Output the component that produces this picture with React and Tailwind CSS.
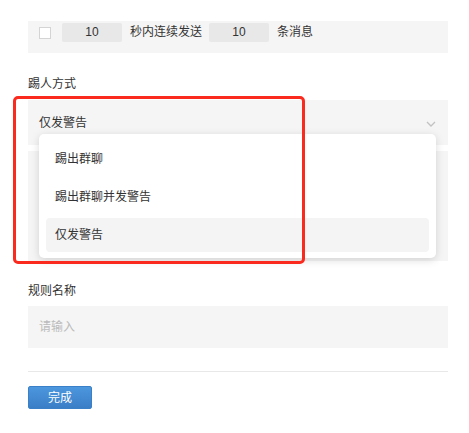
import React from "react";

export default function App() {
  const font = { fontFamily: '"Liberation Sans","Noto Sans CJK SC",sans-serif' };
  return (
    <div className="relative w-[469px] h-[433px] bg-white text-[12px] text-[#333] pt-[21px]" style={font}>
      <div className="pl-[28px] w-[448px]">
        {/* top panel */}
        <div className="h-[32px] bg-[#f5f5f5] pt-[2px] pl-[11px] flex items-start">
          <div className="h-[19px] flex items-center">
            <div className="w-[12px] h-[12px] border border-[#d4d4d4] bg-white"></div>
            <div className="ml-[11px] w-[60px] h-[19px] bg-[#e8e8e8] rounded-[2px] flex items-center justify-center text-[12px] leading-[19px]">10</div>
            <span className="ml-[8px] leading-[19px]">秒内连续发送</span>
            <div className="ml-[7px] w-[60px] h-[19px] bg-[#e8e8e8] rounded-[2px] flex items-center justify-center text-[12px] leading-[19px]">10</div>
            <span className="ml-[8px] leading-[19px]">条消息</span>
          </div>
        </div>

        {/* kick method */}
        <div className="mt-[22px] leading-[18px] mb-[7px]">踢人方式</div>
        <div className="h-[45px] bg-[#f5f5f5] pl-[11px] pr-[10px] flex items-center justify-between pt-[1px]">
          <span>仅发警告</span>
          <svg width="10" height="6" viewBox="0 0 10 6" className="mr-[2px] mt-[1px]">
            <path d="M1 1 L5 5 L9 1" fill="none" stroke="#c2c2c2" strokeWidth="1.3" />
          </svg>
        </div>
        <div className="mt-[6px] h-[110px] bg-[#f5f5f5]"></div>

        {/* rule name */}
        <div className="mt-[21px] leading-[18px] mb-[6px]">规则名称</div>
        <div className="h-[42px] bg-[#f5f5f5] pl-[11px] flex items-center text-[#bbbbbb]">请输入</div>

        <div className="mt-[23px] h-px bg-[#e8e8e8]"></div>

        <button className="mt-[14px] w-[64px] h-[23px] rounded-[2px] border border-[#3a80c8] bg-gradient-to-b from-[#4c97de] to-[#3a7ec6] text-white text-[12px] flex items-center justify-center">
          完成
        </button>
      </div>

      {/* dropdown menu */}
      <div className="absolute left-[39px] top-[134px] w-[397px] h-[124px] bg-white rounded-[5px] shadow-[0_2px_8px_rgba(0,0,0,0.15)] pt-[8px] px-[7px] flex flex-col gap-[4px]">
        <div className="h-[34px] pl-[9px] flex items-center rounded-[4px]">踢出群聊</div>
        <div className="h-[34px] pl-[9px] flex items-center rounded-[4px]">踢出群聊并发警告</div>
        <div className="h-[34px] pl-[9px] flex items-center rounded-[4px] bg-[#f4f4f4]">仅发警告</div>
      </div>

      {/* red annotation box */}
      <div className="absolute left-[13px] top-[96px] w-[292px] h-[168px] border-[3px] border-[#fb2a1e] rounded-[5px]"></div>
    </div>
  );
}
